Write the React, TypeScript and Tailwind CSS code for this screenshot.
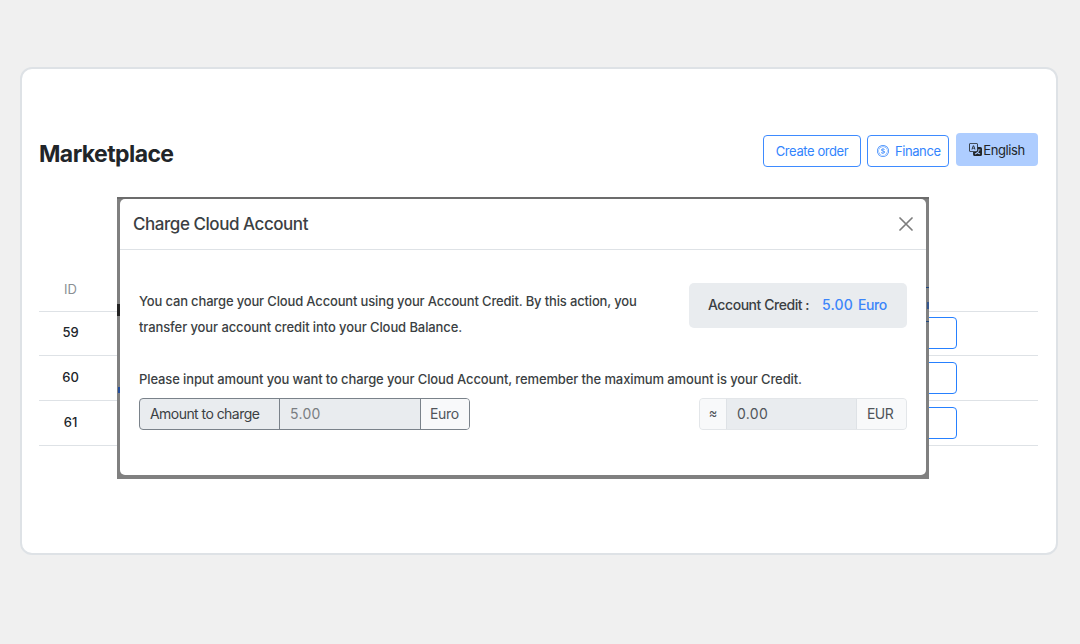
import { BsCoin, BsTranslate } from "react-icons/bs";

const orders = [
  { id: "59", size: "h-[44px] pb-px" },
  { id: "60", size: "h-[45px]" },
  { id: "61", size: "h-[45px]" },
];

function Toolbar() {
  return (
    <header className="flex h-8 items-start justify-between">
      <h1 className="pt-[5px] text-[23px] leading-8 font-bold tracking-[-0.57px] whitespace-nowrap text-[#212529]">Marketplace</h1>
      <div className="flex items-start text-[13px] tracking-[-0.42px] whitespace-nowrap">
        <button className="mt-0.5 flex h-8 w-[98px] items-center justify-center rounded-[4px] border border-[#3e8bff] pt-px text-[#3284fd]">
          <span>Create order</span>
        </button>
        <button className="mt-0.5 ml-[6px] flex h-8 w-[82px] items-center rounded-[4px] border border-[#3e8bff] pl-[9px] text-[#3284fd]">
          <BsCoin size={12} />
          <span className="ml-1.5 pt-px">Finance</span>
        </button>
        <button className="ml-[7px] flex h-[33px] w-[82px] items-center justify-center rounded-[4px] bg-[#aecdff] text-[#212529]">
          <BsTranslate size={13} />
          <span className="ml-px pt-0.5">English</span>
        </button>
      </div>
    </header>
  );
}

function OrdersTable() {
  return (
    <div className="mt-[102px] text-[13px]">
      <div className="flex h-[45px] border-b border-[#dee2e6] text-[#8a8f94]">
        <div className="flex w-[63px] items-center justify-center pt-0.5">ID</div>
      </div>
      {orders.map(({ id, size }) => (
        <div key={id} className={`flex ${size} items-center justify-between border-b border-[#dee2e6] pr-[81px] text-[#212529]`}>
          <div className="w-[63px] text-center font-medium">{id}</div>
          <div className="h-8 w-[90px] rounded-[4px] border border-[#2680ff]" />
        </div>
      ))}
    </div>
  );
}

function ChargeDialog() {
  return (
    <div className="absolute top-[197px] left-[117px] h-[282px] w-[812px] bg-[#808080] pt-[2px] pr-[3px] pb-[4px] pl-[3px] shadow-[inset_0_2px_0_#6c6c6c]">
      <div className="absolute top-[107px] left-0 h-[12px] w-[3px] bg-[#222222]" />
      <div className="absolute top-[190px] left-px h-[6px] w-[2px] bg-[#234e9c]" />
      <div className="absolute top-[90px] right-0 h-px w-[3px] bg-[#204780]" />
      <div className="absolute top-[105px] right-0 h-[7px] w-[2px] bg-[#36578d]" />
      <div className="absolute top-[124px] right-0 h-px w-[3px] bg-[#204780]" />
      <section className="relative flex h-full flex-col rounded-[5px] bg-white text-[#3b3f43]">
        <div className="flex h-[51px] items-center justify-between border-b border-[#dee2e6] px-[13px]">
          <h2 className="pt-0.5 text-[17px] font-medium tracking-[-0.45px] whitespace-nowrap">Charge Cloud Account</h2>
          <svg width="14" height="14" viewBox="0 0 14 14" fill="none" stroke="#7d7d7d" strokeWidth="1.7" strokeLinecap="round">
            <path d="M1 1l12 12M13 1L1 13" />
          </svg>
        </div>
        <div className="flex flex-1 flex-col px-[19px] text-[13px] font-medium whitespace-nowrap">
          <div className="mt-[33px] flex items-start justify-between">
            <div className="pt-[5px] leading-[26px]">
              <p className="tracking-[-0.155px]">You can charge your Cloud Account using your Account Credit. By this action, you</p>
              <p className="tracking-[-0.095px]">transfer your account credit into your Cloud Balance.</p>
            </div>
            <div className="flex h-[45px] w-[218px] items-center rounded-[5px] bg-[#e9ecef] pb-0.5 pl-[19px] text-[14px]">
              <span className="w-[101px] tracking-[-0.45px]">Account Credit :</span>
              <span className="ml-[13px] tracking-[0.2px] text-[#3c85fa]">5.00</span>
              <span className="ml-[5px] tracking-[-0.4px] text-[#3c85fa]">Euro</span>
            </div>
          </div>
          <p className="mt-[26px] leading-[26px] tracking-[-0.117px]">Please input amount you want to charge your Cloud Account, remember the maximum amount is your Credit.</p>
          <div className="mt-[6px] flex items-center justify-between text-[14px] font-normal text-[#50555a]">
            <div className="flex h-8 w-[331px] overflow-hidden rounded-[4px] border border-[#7a828a] bg-[#e9ecef]">
              <div className="flex w-[140px] items-center border-r border-[#7a828a] pb-px pl-2.5 tracking-[-0.55px] text-[#3b3f43]">Amount to charge</div>
              <div className="flex flex-1 items-center pb-px pl-2.5 tracking-[0.3px] text-[#7a7e82]">5.00</div>
              <div className="flex w-[49px] items-center border-l border-[#7a828a] bg-[#f8f9fa] pb-px pl-[9px] tracking-[-0.3px]">Euro</div>
            </div>
            <div className="flex h-8 w-[208px] overflow-hidden rounded-[4px] border border-[#e3e6e9] bg-[#e9ecef]">
              <div className="flex w-[27px] items-center justify-center border-r border-[#dee2e6] bg-[#f8f9fa] text-[13px]">≈</div>
              <div className="flex flex-1 items-center pb-px pl-2.5 tracking-[0.35px]">0.00</div>
              <div className="flex w-[50px] items-center border-l border-[#dee2e6] bg-[#f8f9fa] pb-px pl-[10px] tracking-[-0.6px]">EUR</div>
            </div>
          </div>
        </div>
      </section>
    </div>
  );
}

export default function App() {
  return (
    <main className="relative h-[644px] w-[1080px] overflow-hidden bg-[#f0f0f0] px-5 pt-[67px] font-['Inter',sans-serif]">
      <div className="h-[488px] w-[1038px] rounded-[12px] border-2 border-[#dee2e6] bg-white pt-[64px] pr-[18px] pl-[17px]">
        <Toolbar />
        <OrdersTable />
      </div>
      <ChargeDialog />
    </main>
  );
}
